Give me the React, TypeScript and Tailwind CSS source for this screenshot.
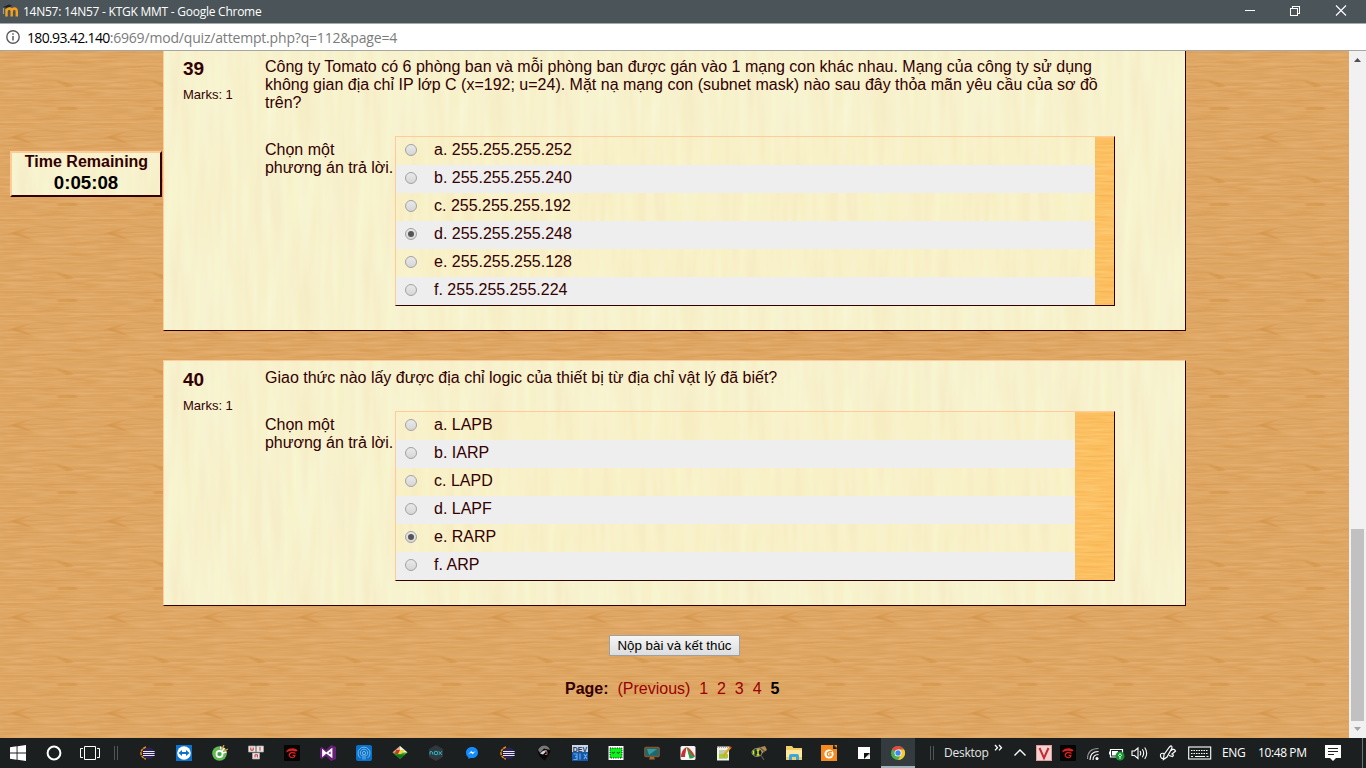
import React from "react";

const SANS = "font-['Liberation_Sans',Arial,sans-serif]";
const UI = "font-['Open_Sans','Noto_Sans',sans-serif]";

function Textures() {
  return (
    <svg className="absolute h-0 w-0" aria-hidden="true">
      <defs>
        <filter id="grain" x="0" y="0" width="96" height="96" filterUnits="userSpaceOnUse" colorInterpolationFilters="sRGB">
          <feTurbulence type="fractalNoise" baseFrequency="0.03 0.42" numOctaves="2" seed="8" stitchTiles="stitch" />
          <feColorMatrix values="0.07 0 0 0 0.838  0.11 0 0 0 0.598  0.16 0 0 0 0.312  0 0 0 0 1" />
        </filter>
        <filter id="honey" x="0" y="0" width="96" height="96" filterUnits="userSpaceOnUse" colorInterpolationFilters="sRGB">
          <feTurbulence type="fractalNoise" baseFrequency="0.03 0.42" numOctaves="2" seed="5" stitchTiles="stitch" />
          <feColorMatrix values="0.03 0 0 0 0.97  0.12 0 0 0 0.69  0.2 0 0 0 0.28  0 0 0 0 1" />
        </filter>
        <filter id="fibre" x="0" y="0" width="192" height="192" filterUnits="userSpaceOnUse" colorInterpolationFilters="sRGB">
          <feTurbulence type="fractalNoise" baseFrequency="0.11 0.012" numOctaves="2" seed="11" stitchTiles="stitch" />
          <feColorMatrix values="0.01 0 0 0 0.963  0.06 0 0 0 0.917  0.07 0.05 0 0 0.742  0 0 0 0 1" />
        </filter>
        <filter id="soft"><feGaussianBlur stdDeviation="1.2 0.5" /></filter>
        <pattern id="wood" width="96" height="96" patternUnits="userSpaceOnUse" x="36" y="3">
          <rect width="96" height="96" filter="url(#grain)" />
          <g fill="#d18f43" opacity=".5" filter="url(#soft)">
            <path d="M19 3Q32 4 39 9Q31 12 27 8Z" transform="translate(-1 23)" />
            <path d="M96 62Q82 65 73 68Q84 73 96 75Q85 68 80 68Z" transform="translate(-3 15)" />
            <path d="M54 35h20v3H55Z" transform="translate(-33 18)" />
          </g>
          <path d="M0 40Q40 41 60 33T96 31M0 94Q30 95 66 90" fill="none" stroke="#cf8d42" strokeOpacity=".22" />
        </pattern>
        <pattern id="honeywood" width="96" height="96" patternUnits="userSpaceOnUse">
          <rect width="96" height="96" filter="url(#honey)" />
        </pattern>
        <pattern id="paper" width="192" height="192" patternUnits="userSpaceOnUse">
          <rect width="192" height="192" filter="url(#fibre)" />
        </pattern>
      </defs>
    </svg>
  );
}

function Surface({ kind }: { kind: "wood" | "honeywood" | "paper" }) {
  return (
    <svg className="absolute inset-0 h-full w-full" aria-hidden="true">
      <rect width="100%" height="100%" fill={`url(#${kind})`} />
    </svg>
  );
}

function Radio({ on }: { on: boolean }) {
  return (
    <span className="mb-[2px] ml-[9px] flex h-3 w-3 items-center justify-center rounded-full border border-[#a2a2a2] bg-linear-to-b from-[#e9e9e9] to-[#d6d6d6]">
      {on && <span className="h-1.5 w-1.5 rounded-full bg-[#555]" />}
    </span>
  );
}

type Q = { num: number; body: string[]; answers: string[]; chosen: number; wide: boolean };

function Question({ num, body, answers, chosen, wide }: Q) {
  return (
    <section
      className={`relative border border-t-[#ffcc99] border-l-[#ffcc99] border-r-[#330000] border-b-[#330000] ${
        wide ? "-mt-px h-[281px]" : "mt-[29px] h-[246px]"
      }`}
    >
      <Surface kind="paper" />
      <div className={`relative flex pl-[19px] ${wide ? "pt-[7px]" : "pt-[8px]"}`}>
        <div className="w-[82px] shrink-0">
          <div className="text-[19px] leading-[22px] font-bold">{num}</div>
          <div className="mt-[7px] text-[13px] leading-[15px]">Marks: 1</div>
        </div>
        <div>
          <div className="text-base leading-[18px] whitespace-nowrap">
            {body.map((line) => (
              <div key={line}>{line}</div>
            ))}
          </div>
          <div className="mt-[24px] flex">
            <div className="w-[130px] pt-[5px] text-base leading-[18px] whitespace-nowrap">
              Chọn một
              <br />
              <span className="tracking-[-0.03px]">phương án trả lời.</span>
            </div>
            <div className="flex w-[720px] border border-t-[#ffcc99] border-l-[#ffcc99] border-r-[#330000] border-b-[#330000]">
              <div className="grow">
                {answers.map((a, i) => (
                  <div key={a} className={`flex h-7 items-center ${i % 2 ? "bg-[#eeeeee]" : "bg-[#ffe9b0]/15"}`}>
                    <Radio on={i === chosen} />
                    <span className="ml-[17px] pb-[2px] text-base leading-[18px]">{a}</span>
                  </div>
                ))}
              </div>
              <div className={`relative ${wide ? "w-[19px]" : "w-[39px]"}`}>
                <Surface kind="honeywood" />
              </div>
            </div>
          </div>
        </div>
      </div>
    </section>
  );
}

const questions: Q[] = [
  {
    num: 39,
    body: [
      "Công ty Tomato có 6 phòng ban và mỗi phòng ban được gán vào 1 mạng con khác nhau. Mạng của công ty sử dụng",
      "không gian địa chỉ IP lớp C (x=192; u=24). Mặt nạ mạng con (subnet mask) nào sau đây thỏa mãn yêu cầu của sơ đồ",
      "trên?",
    ],
    answers: ["a. 255.255.255.252", "b. 255.255.255.240", "c. 255.255.255.192", "d. 255.255.255.248", "e. 255.255.255.128", "f. 255.255.255.224"],
    chosen: 3,
    wide: true,
  },
  {
    num: 40,
    body: ["Giao thức nào lấy được địa chỉ logic của thiết bị từ địa chỉ vật lý đã biết?"],
    answers: ["a. LAPB", "b. IARP", "c. LAPD", "d. LAPF", "e. RARP", "f. ARP"],
    chosen: 4,
    wide: false,
  },
];

const Ico = ({ children, w = 16 }: { children: React.ReactNode; w?: number }) => (
  <svg width={w} height="16" viewBox={`0 0 ${w} 16`} className="shrink-0">
    {children}
  </svg>
);

const Eclipse = () => (
  <Ico>
    <path d="M6 2Q1 4 1 8t5 6" fill="none" stroke="#e98a1c" strokeWidth="1.6" strokeDasharray="3 .7" />
    <circle cx="8.7" cy="8.3" r="5.9" fill="#2c2255" />
    <path d="M3 6.5h11.6M3 8.5h11.6M3 10.5h11.6" stroke="#e8e6f4" strokeWidth="1" />
  </Ico>
);
const Garena = () => (
  <Ico>
    <rect width="16" height="16" rx="1" fill="#050505" />
    <path d="M2 7.5Q3 3.5 7 3.5Q10.5 2.500 13.500 5Q13.500 6.500 11 6.500Q7 4.800 2 7.500Z" fill="#e0201e" />
    <path d="M11.500 8.500Q10 7.300 7.500 7.700Q4.800 8.500 5.300 10.800Q6.300 13 8.800 12.700Q11 12.200 11 10.300H8.500" fill="none" stroke="#e0201e" strokeWidth="1.200" />
  </Ico>
);

const apps: React.ReactNode[] = [
  <Eclipse />,
  <Ico>
    <rect width="16" height="16" fill="#0b72d0" />
    <circle cx="8" cy="8" r="6.8" fill="#fff" />
    <path d="M2.500 8L6 5v2h4V5l3.500 3L10 11V9H6v2Z" fill="#0b72d0" />
  </Ico>,
  <Ico>
    <circle cx="7.500" cy="8.500" r="7.300" fill="#62b955" />
    <circle cx="7.500" cy="9" r="3.100" fill="none" stroke="#fff" strokeWidth="1.600" />
    <circle cx="7.500" cy="9" r="1.500" fill="#3e9e49" />
    <path d="M8.500 1.500l.5 3M12.500 3l-3 4M14.500 7l-4 1" stroke="#fff" strokeWidth="1.300" />
    <path d="M12 0l-2 4M16 4l-4 2" stroke="#f3943c" strokeWidth="1.300" />
  </Ico>,
  <Ico>
    <path d="M.500 1h7v6h-7ZM8.500 1h7v6h-7ZM4.500 8h7v6h-7Z" fill="#e7e7e5" stroke="#aaa" strokeWidth=".7" />
    <path d="M2.800 2.500v2.700h2.400V2.500M12 2v3.700M7 12.500v-2.700h2.400v2.700" fill="none" stroke="#d72c2b" />
  </Ico>,
  <Garena />,
  <Ico>
    <path d="M11 0L16 2v12l-5 2-5-5-4 3-2-1V3l2-1 4 3Z" fill="#68217a" />
    <path d="M11.500 4.500L7 8 11.500 11.500ZM3 5.800L5.500 8 3 10.200Z" fill="#68217a" stroke="#fff" strokeWidth="1.800" />
  </Ico>,
  <Ico>
    <rect width="16" height="16" rx="2" fill="#0971c9" />
    <g fill="none" stroke="#76b9e9">
      <path d="M4.500 13A6 6 0 1 1 11.500 13M5.700 10.800A3.700 3.700 0 1 1 10.300 10.800" />
      <circle cx="8" cy="8" r="1.600" />
      <path d="M7 9.500v5M9 9.500v5" />
    </g>
  </Ico>,
  <Ico>
    <path d="M8 1L15.500 7.500 8 14 .500 7.500Z" fill="#49a629" />
    <path d="M8 1L.500 7.500 8 7Z" fill="#e7a39c" />
    <path d="M8 1l7.500 6.500H8Z" fill="#eef3dc" />
    <path d="M4 5h4v4H3Z" fill="#cd3527" />
    <path d="M8 5h5L9 9H6Z" fill="#e5d83e" />
    <path d="M3 9.500h10L8 14Z" fill="#147519" />
  </Ico>,
  <Ico>
    <path d="M8 0l7 4v8l-7 4-7-4V4Z" fill="#33383d" />
    <path d="M2 9.500V6.700q2.800-1 2.800 2.800M6.200 8a1.800 1.800 0 1 0 3.600 0 1.800 1.800 0 1 0-3.600 0M10.800 6.300l3 3.600M13.800 6.300l-3 3.600" fill="none" stroke="#22bfd2" strokeWidth="1" />
  </Ico>,
  <Ico>
    <path d="M8 2C4.300 2 2 4.500 2 7.700c0 2 1 3.600 2.400 4.500V14l2-1.100C11 13.600 14 11 14 7.700 14 4.500 11.700 2 8 2Z" fill="#148cff" />
    <path d="M4.300 9.200L7.300 6l1.600 1.600L11.700 6l-3 3.300-1.600-1.600Z" fill="#fff" />
  </Ico>,
  <Eclipse />,
  <Ico>
    <path d="M8 0Q15 1 14.500 7L9 15.500Q2 12 1.500 5Q3 0 8 0Z" fill="#080808" />
    <path d="M2 5Q4 0 9 .500Q13 1 14 5L8 3.500L4 8Z" fill="#777" />
    <path d="M4 8.500Q8 4 11 5.500L7 9.500Z" fill="#d5d5d5" />
    <path d="M9 6.500h2v3H9" fill="none" stroke="#b56060" />
  </Ico>,
  <Ico>
    <rect width="16" height="16" fill="#1758a4" />
    <rect width="16" height="7" fill="#c9d8e8" />
    <text x="8" y="6.500" fontSize="7" fontWeight="bold" textAnchor="middle" fill="#1e3560" fontFamily="Liberation Sans">DEV</text>
    <path d="M1.500 9h3.500v5.500H1.500M3 11.700h2M8 8.500v6M12 9l3 5M15 9l-3 5" stroke="#62a8f0" strokeWidth="1.200" fill="none" />
  </Ico>,
  <Ico>
    <rect x=".5" y="1" width="15" height="14" fill="#fff" />
    <rect x="2" y="3" width="12" height="10" fill="#0df21c" stroke="#111" strokeDasharray="1 1.300" />
    <path d="M4 7l1 1.500L7 7M9 7l1 1.500L12 7" fill="none" stroke="#064e0a" />
  </Ico>,
  <Ico>
    <rect x=".8" y="2.500" width="14.400" height="9" rx="1" fill="#176b70" stroke="#86532b" strokeWidth="1.300" />
    <path d="M3 4h10L5 10Z" fill="#3e979a" />
    <path d="M6 12h4l1 2.500H5Z" fill="#9c6a38" />
  </Ico>,
  <Ico>
    <rect x=".5" y="1" width="15" height="14" rx="1.500" fill="#f4f4f4" />
    <path d="M6.500 2Q1 5 1 12L5 12Z" fill="#c7322c" />
    <path d="M6.500 2L15 11.500Q13 14 9.500 13.500Z" fill="#2f9e49" />
    <path d="M6.500 2Q11 3 15 11.500L12 10Z" fill="#d33a30" />
    <path d="M6.500 4L5 13h4Z" fill="#fff" />
  </Ico>,
  <Ico>
    <rect x="1" y="1.500" width="12" height="14" fill="#f4f1e8" />
    <path d="M1 2h12" stroke="#888" strokeWidth="1.500" strokeDasharray="1 1" />
    <path d="M3 6h7M3 8h6M3 13h8" stroke="#89a66e" />
    <path d="M3 9h9v4H3Z" fill="#a0ce38" />
    <path d="M14.500 2L7 11.500" stroke="#e0a421" strokeWidth="2.200" />
    <path d="M13.500 1.500l2 1.500" stroke="#cb3a30" strokeWidth="1.500" />
  </Ico>,
  <Ico>
    <path d="M6 3L14 1l2 4-6 4Z" fill="#b58a4a" />
    <path d="M9 9l4 6M8 2l6 5" stroke="#555" strokeWidth="1.300" />
    <ellipse cx="6" cy="7.500" rx="5" ry="4" fill="#141a10" stroke="#d8d3c5" strokeWidth=".6" />
    <path d="M2.500 5.500v4M7 5v5M5.500 5h3M5.500 10h3" stroke="#e4e623" strokeWidth="1.500" />
    <path d="M3.800 4.500v6" stroke="#2ca237" />
  </Ico>,
  <Ico>
    <path d="M0 1h6l1.500 2H16v12H0Z" fill="#f4ce67" />
    <path d="M0 5h16v7H0Z" fill="#ffe9a0" />
    <path d="M3 15v-4q0-2 2-2h6q2 0 2 2v4h-3v-3H6v3Z" fill="#3aa7df" />
  </Ico>,
  <Ico>
    <path d="M0 0h12l4 4v12H0Z" fill="#f58a1f" />
    <path d="M12 0v4h4Z" fill="#1b1f20" />
    <path d="M13 0l3 3V0Z" fill="#f58a1f" />
    <circle cx="8" cy="9" r="4.600" fill="#fff" />
    <path d="M11 6.500Q6 6.500 6.300 9.200T10 10.500V9H8" fill="none" stroke="#f58a1f" strokeWidth="1.300" />
  </Ico>,
  <Ico>
    <path d="M2 2h12v7l-4 5H2Z" fill="#fff" />
    <path d="M8 8h6l-6 6Z" fill="#111" />
    <path d="M9.500 14L14 9.500V14Z" fill="#fff" />
  </Ico>,
];

const Chrome = () => (
  <Ico>
    <circle cx="8" cy="8" r="7" fill="#4caf50" />
    <path d="M8 8L1.900 4.500A7 7 0 0 1 14.100 4.500H8Z" fill="#e04a3f" />
    <path d="M8 4.500h6.100A7 7 0 0 1 8 15l3-5.300Z" fill="#fbc92f" />
    <circle cx="8" cy="8" r="3.500" fill="#fff" />
    <circle cx="8" cy="8" r="2.700" fill="#4285f4" />
  </Ico>
);

const Divider = () => (
  <div className="flex h-[14px] w-[4px] justify-between">
    <span className="w-px bg-[#50575a]" />
    <span className="w-px bg-[#50575a]" />
  </div>
);

function Taskbar() {
  return (
    <footer className={`flex h-[30px] shrink-0 items-center bg-[#1b1f20] text-[12px] text-white ${UI}`}>
      <div className="flex w-9 justify-center">
        <Ico><path d="M0 2.300l6.600-1v6.300H0ZM7.500 1.200L16 0v7.600H7.500ZM0 8.500h6.600v6.300L0 13.800ZM7.500 8.500H16V16l-8.500-1.200Z" fill="#fff" /></Ico>
      </div>
      <div className="flex w-9 justify-center">
        <Ico><circle cx="8" cy="8" r="6.400" fill="none" stroke="#fff" strokeWidth="2" /></Ico>
      </div>
      <div className="flex w-9 justify-center">
        <Ico w={20}>
          <path d="M4.500 1.500h11v13h-11ZM3 3.500H.500v9H3M17 3.500h2.500v9H17" fill="none" stroke="#fff" />
        </Ico>
      </div>
      <div className="flex w-[22px] shrink-0 pl-[6px]"><Divider /></div>
      {apps.map((a, i) => (
        <div key={i} className={`flex shrink-0 justify-center ${i > 15 ? "w-[35px]" : "w-9"}`}>{a}</div>
      ))}
      <div className="flex h-full w-[34px] shrink-0 items-center justify-center border-b-2 border-[#9fb3bd] bg-[#343b3e] pt-[2px]"><Chrome /></div>
      <div className="ml-[15px]"><Divider /></div>
      <span className="ml-[10px] w-[50px] tracking-[-0.25px] text-[#e4e6e6]">Desktop</span>
      <svg width="9" height="8" viewBox="0 0 9 8" className="mb-[10px] shrink-0">
        <path d="M1 1l2.500 2.700L1 6.400M5 1l2.500 2.700L5 6.400" fill="none" stroke="#fff" strokeWidth="1.300" />
      </svg>
      <div className="ml-[10px]"><Ico w={14}><path d="M1.500 10.500L7 5l5.500 5.500" fill="none" stroke="#fff" strokeWidth="1.400" /></Ico></div>
      <div className="ml-[9px]">
        <Ico>
          <rect width="16" height="16" fill="#f5d2d2" />
          <rect x=".5" y=".5" width="15" height="15" fill="none" stroke="#e39a9a" />
          <path d="M3.500 3L8 13 12.500 3" fill="none" stroke="#c42d2f" strokeWidth="2" />
        </Ico>
      </div>
      <div className="ml-[8px]"><Garena /></div>
      <div className="ml-[10px]">
        <Ico w={14}>
          <g fill="none" stroke="#fff" strokeWidth="1.100">
            <path d="M1.500 14Q1.500 3.500 12.500 3.500" stroke="#999" />
            <path d="M4 15Q4 6.500 12.500 6.500M7 15Q7 9.500 12.500 9.500" />
          </g>
          <circle cx="11" cy="13.500" r="1.500" fill="#fff" />
        </Ico>
      </div>
      <div className="ml-[9px]">
        <Ico w={16}>
          <path d="M13.500 8V4.500H1.500v7.500H8M0.500 6.500v3" fill="none" stroke="#fff" strokeWidth="1.200" />
          <rect x="3" y="6" width="6" height="4.500" fill="#fff" />
          <circle cx="11" cy="11" r="4.500" fill="#159432" />
          <path d="M11 14v-3M9.500 10.500l1.500-2 1.500 2-1.500 1.500Z" fill="none" stroke="#e5ffe9" />
        </Ico>
      </div>
      <div className="ml-[6px]">
        <Ico w={17}>
          <path d="M1 6v4.500h2.500L7 13.500V3L3.500 6ZM9 6q1.500 2.300 0 4.500M11.300 4.200q2.800 4 0 8M13.700 2.500q4 5.700 0 11.500" fill="none" stroke="#fff" strokeWidth="1.100" />
        </Ico>
      </div>
      <div className="ml-[11px]">
        <Ico w={18}>
          <path d="M5 9.500L10.500 2Q13-.5 13 3L8 12 4.500 14.500ZM5 8.500Q1 7.500 1.500 11T6.500 13.500M12 5.500Q15 3 16.500 6L13 9Q15.500 10 13.500 11.500L10 10.500" fill="none" stroke="#fff" strokeWidth="1.200" />
        </Ico>
      </div>
      <div className="ml-[11px]">
        <Ico w={24}>
          <rect x=".7" y="2" width="22" height="12" fill="none" stroke="#fff" strokeWidth="1.100" />
          <path d="M3 5.500h17.500M3 8.500h17.500" stroke="#fff" strokeWidth="1.200" strokeDasharray="1.500 1" />
          <path d="M3 11.500h2M7 11.500h10M18.500 11.500h2" stroke="#fff" />
        </Ico>
      </div>
      <span className="ml-[10px] w-[36px] tracking-[-0.4px]">ENG</span>
      <span className="w-[67px] tracking-[-0.4px] whitespace-nowrap">10:48 PM</span>
      <Ico>
        <path d="M0 0h16v13h-5l-3 3-3-3H0Z" fill="#fff" />
        <path d="M3 3.500h10M3 6.500h10M3 9.500h6" stroke="#222" />
      </Ico>
      <div className="ml-auto mr-[3px] h-full w-px bg-[#6e7374]" />
    </footer>
  );
}

const NB = "\u00a0\u00a0";

export default function App() {
  return (
    <div className={`flex h-[768px] w-[1366px] flex-col overflow-hidden ${SANS}`}>
      <Textures />
      <header className="flex h-6 shrink-0 items-center border-b border-[#a5a9ab] bg-[#4b5559]">
        <svg width="18" height="16" viewBox="0 0 18 16" className="mb-[1px] ml-[2px]">
          <path d="M1 4l6-2.500 3 1-4 2.500Z" fill="#222" />
          <path d="M1.500 5v6" stroke="#9c9c9c" strokeWidth="1.200" />
          <path d="M4.500 13.500V6M4.500 8.500Q5 5.500 7.300 5.500T9.700 8.500v5M9.700 8.500Q10.200 5.500 12.400 5.500t2.400 3v5" fill="none" stroke="#f6a11d" strokeWidth="2.400" />
        </svg>
        <span className={`ml-[3px] text-[12px] tracking-[-0.25px] text-white ${UI}`}>14N57: 14N57 - KTGK MMT - Google Chrome</span>
        <svg width="104" height="12" viewBox="0 0 104 12" className="mr-[18px] mb-[4px] ml-auto">
          <g fill="none" stroke="#fff" shapeRendering="crispEdges">
            <path d="M1 6.500h10M46.500 4.500h7v7h-7ZM48.500 4.500v-2h7v7h-2" />
          </g>
          <path d="M92 1.500l10 10M102 1.500l-10 10" stroke="#fff" strokeWidth="1.100" />
        </svg>
      </header>
      <div className={`flex h-[27px] shrink-0 items-center border-b border-[#a6a6a6] bg-white ${UI}`}>
        <svg width="14" height="14" viewBox="0 0 14 14" className="ml-[6px]">
          <circle cx="7" cy="7" r="6.200" fill="none" stroke="#5a5a5a" strokeWidth="1.400" />
          <path d="M7 6v4.500M7 3.300v1.500" stroke="#5a5a5a" strokeWidth="1.500" />
        </svg>
        <span className="ml-[7px] text-[14px] tracking-[-0.18px] text-[#7b7b7b]">
          <span className="tracking-[-0.65px] text-black">180.93.42.140</span>:6969/mod/quiz/attempt.php?q=112&amp;page=4
        </span>
      </div>
      <div className="flex h-[687px] shrink-0">
        <main className="relative flex w-[1349px] overflow-hidden text-[#330000]">
          <Surface kind="wood" />
          <aside className="relative w-[163px] shrink-0 pt-[100px] pl-[10px]">
            <div className="relative h-[46px] w-[152px] border-2 border-t-[#ffcc99] border-l-[#ffcc99] border-r-[#330000] border-b-[#330000] text-center font-bold">
              <Surface kind="paper" />
              <div className="relative pl-px text-base leading-[18px]">Time Remaining</div>
              <div className="relative pt-px text-[18.7px] leading-[22px] text-black">0:05:08</div>
            </div>
          </aside>
          <div className="relative w-[1023px]">
            {questions.map((q) => (
              <Question key={q.num} {...q} />
            ))}
            <div className="mt-[29px] flex justify-center">
              <button className="h-[21px] w-[131px] border border-[#a0a0a0] bg-linear-to-b from-[#f5f5f5] to-[#dddddd] text-[13.33px] leading-[19px] whitespace-nowrap text-black">
                Nộp bài và kết thúc
              </button>
            </div>
            <nav className="mt-[24px] ml-[402px] text-base leading-[18px] whitespace-nowrap">
              <b>Page:</b>{NB}
              <span className="text-[#990000]">(Previous){NB}1{NB}2{NB}3{NB}4{NB}</span>
              <b className="text-black">5</b>
            </nav>
          </div>
        </main>
        <div className="flex w-[17px] flex-col items-center bg-[#f1f1f1]">
          <svg width="17" height="17" viewBox="0 0 17 17"><path d="M5 11l3.500-4L12 11Z" fill="#505050" /></svg>
          <div className="mt-[461px] h-[192px] w-[13px] bg-[#c1c1c1]" />
          <svg width="17" height="17" viewBox="0 0 17 17"><path d="M5 6l3.500 4L12 6Z" fill="#a3a3a3" /></svg>
        </div>
      </div>
      <Taskbar />
    </div>
  );
}
